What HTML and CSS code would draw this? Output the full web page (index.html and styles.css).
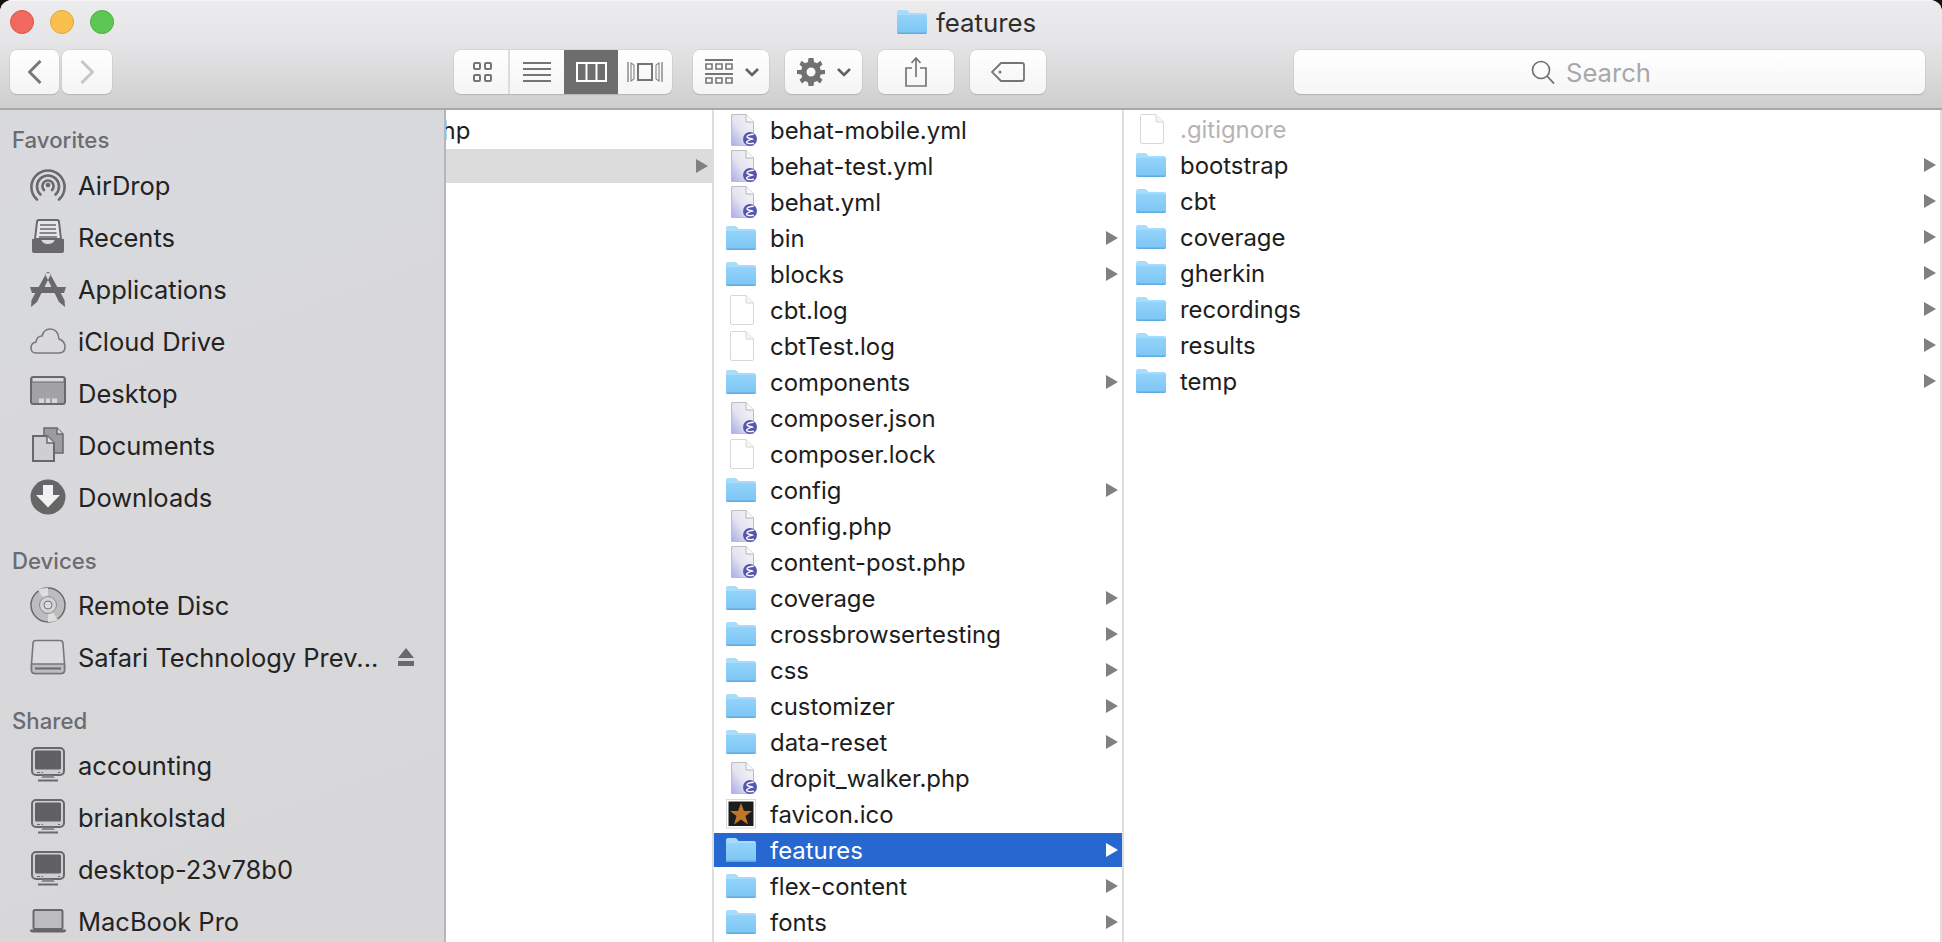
FILE: index.html
```html
<!DOCTYPE html>
<html lang="en">
<head>
<meta charset="utf-8">
<title>features</title>
<link rel="stylesheet" href="styles.css">
</head>
<body>
<svg class="defs" width="0" height="0" aria-hidden="true">
  <defs>
    <linearGradient id="fg" x1="0" y1="0" x2="0" y2="1"><stop offset="0" stop-color="#93d3fa"/><stop offset="1" stop-color="#7cc5f5"/></linearGradient>
    <linearGradient id="pg" x1="1" y1="0" x2="0" y2="1"><stop offset="0" stop-color="#f6f6f6"/><stop offset=".55" stop-color="#e4e4f0"/><stop offset="1" stop-color="#a9a9e8"/></linearGradient>
    <symbol id="folder" viewBox="0 0 30 24">
      <path d="M0 3Q0 0 2 0H9Q10.500 0 11.500 1.500L12.500 3H28Q30 3 30 5V22Q30 24 28 24H2Q0 24 0 22Z" fill="#a7ddfb"/>
      <path d="M0 6Q0 5 1 5H29Q30 5 30 6V22Q30 24 28 24H2Q0 24 0 22Z" fill="url(#fg)"/>
      <path d="M0 22.500H30V22Q30 24 28 24H2Q0 24 0 22Z" fill="#5fabe0"/>
    </symbol>
    <symbol id="doc" viewBox="0 0 24 30">
      <path d="M1.500 .5H16L23.500 8V28Q23.500 29.500 22 29.500H2Q.5 29.500 .5 28V1.500Q.5.5 1.500.5Z" fill="#fff" stroke="#d6d6d6"/>
      <path d="M16 .5V7Q16 8 17 8H23.500" fill="#f4f4f4" stroke="#d6d6d6"/>
    </symbol>
    <symbol id="script" viewBox="0 0 26 32">
      <path d="M.5 .5H15L22.500 8V31.500H.5Z" fill="url(#pg)" stroke="#bdbdc4"/>
      <path d="M15 .5V8H22.500" fill="#fafafa" stroke="#b5b5b5"/>
      <circle cx="19" cy="25" r="7" fill="#5656ae"/>
      <path d="M22.800 20.300C19 20.300 15.500 21.500 16 23C16.500 24.500 21 24.500 21.500 25C20 25.500 15.500 26.500 15.500 28C15.500 29.500 19.500 30 22.800 29.200" fill="none" stroke="#fff" stroke-width="1.400"/>
    </symbol>
    <symbol id="star" viewBox="0 0 30 30">
      <rect x=".5" y=".5" width="29" height="28.500" fill="#fff" stroke="#d8d8d8"/>
      <rect x="2.500" y="2.500" width="25" height="24.500" fill="#1c1c1c"/>
      <path d="M15 4L18 12H26L19.500 17L22 25.500L15 20.500L8 25.500L10.500 17L4 12H12Z" fill="#c27528"/>
    </symbol>
    <symbol id="airdrop" viewBox="0 0 36 36">
      <g fill="none" stroke="#69696b" stroke-width="2.600" stroke-linecap="round">
        <path d="M7 32.500A16.600 16.600 0 1 1 29 32.500"/>
        <path d="M10.500 27.500A11 11 0 1 1 25.500 27.500"/>
        <path d="M14 23A5.600 5.600 0 1 1 22 23"/>
      </g>
      <circle cx="18" cy="18" r="2.300" fill="#69696b"/>
    </symbol>
    <symbol id="recents" viewBox="0 0 36 36">
      <path d="M5 20L7 3Q7 1 9 1H27Q29 1 29 3L31 20Z" fill="#fff" fill-opacity=".35" stroke="#69696b" stroke-width="2"/>
      <path d="M10 6H26M10 10H26M9.500 14H26.500M9 18H27" stroke="#69696b" stroke-width="1.600"/>
      <path d="M2 19H11Q12 24 18 24Q24 24 25 19H34V31Q34 33 32 33H4Q2 33 2 31Z" fill="#69696b" transform="translate(0,1)"/>
    </symbol>
    <symbol id="apps" viewBox="0 0 36 36">
      <path d="M0 16H10L8 22H2ZM26 16H36L34 22H28ZM13 16H23L25 22H11Z" fill="#69696b"/>
      <path d="M17 1L21 3L7 31L1 36L1.500 29ZM19 1L15 3L29 31L35 36L34.500 29Z" fill="#69696b"/>
    </symbol>
    <symbol id="cloud" viewBox="0 0 36 36">
      <path d="M6 30Q1 30 1 25Q1 20 6 19Q7 13 12 13Q14 6 20 6Q28 6 29 16Q35 18 35 24Q35 30 29 30Z" fill="#dadadd" stroke="#79797b" stroke-width="1.600"/>
    </symbol>
    <symbol id="desktop" viewBox="0 0 36 36">
      <rect x="1" y="2" width="34" height="27" rx="2.500" fill="#a3a3a6" stroke="#69696b" stroke-width="2"/>
      <path d="M2 2.500H34V7H2Z" fill="#d9d9dc" stroke="#69696b" stroke-width="1"/>
      <path d="M9 23.500H27V28H9Z" fill="#d9d9dc"/>
      <path d="M15 23.500V28M21 23.500V28" stroke="#69696b"/>
    </symbol>
    <symbol id="docs" viewBox="0 0 36 36">
      <path d="M14 1H27L33 7V26H14Z" fill="#9c9ca0" stroke="#69696b" stroke-width="1.500"/>
      <path d="M3 9H17L24 16V34H3Z" fill="#cfcfd2" stroke="#69696b" stroke-width="2"/>
      <path d="M17 9V16H24M27 1V7H33" fill="#dedee0" stroke="#69696b" stroke-width="1.500"/>
    </symbol>
    <symbol id="down" viewBox="0 0 36 36">
      <circle cx="18" cy="18" r="17.500" fill="#666668"/>
      <path d="M13 6H23V16H30L18 28.500L6 16H13Z" fill="#f1f1f2"/>
    </symbol>
    <symbol id="disc" viewBox="0 0 36 36">
      <circle cx="18" cy="18" r="17" fill="#bdbdc0" stroke="#69696b" stroke-width="1.500"/>
      <path d="M18 18L8 3A18 18 0 0 1 18 1ZM18 18L28 33A18 18 0 0 1 18 35Z" fill="#dededf"/>
      <circle cx="18" cy="18" r="8.500" fill="#d3d3d5" stroke="#8a8a8c"/>
      <circle cx="18" cy="18" r="4" fill="#dadadd" stroke="#77777a"/>
    </symbol>
    <symbol id="drive" viewBox="0 0 36 36">
      <path d="M6 1.500H30Q33 1.500 33 4.500L34.500 25V31Q34.500 34.500 31 34.500H5Q1.500 34.500 1.500 31V25L3 4.500Q3 1.500 6 1.500Z" fill="#dcdcdf" stroke="#777779" stroke-width="1.600"/>
      <path d="M1.500 25H34.500V31Q34.500 34.500 31 34.500H5Q1.500 34.500 1.500 31Z" fill="#bdbdc0" stroke="#777779" stroke-width="1.600"/>
      <path d="M5 29.500H31" stroke="#69696b" stroke-width="2"/>
    </symbol>
    <symbol id="pc" viewBox="0 0 36 36">
      <rect x="2" y="1" width="32" height="27" rx="4" fill="#cfcfd2" stroke="#69696b" stroke-width="2"/>
      <rect x="5" y="3.500" width="26" height="19" rx="1.500" fill="#616063"/>
      <path d="M7 25.500H10M11.500 25.500H13M28 25.500H30" stroke="#69696b" stroke-width="1.200"/>
      <path d="M13 28.500H23L25 31H11Z" fill="#8a8a8c"/>
      <path d="M8 32.500H28V34.500H8Z" fill="#69696b"/>
    </symbol>
    <symbol id="laptop" viewBox="0 0 36 24">
      <rect x="3.500" y="1" width="29" height="19" rx="1.500" fill="#bcbbbd" stroke="#69696b" stroke-width="2"/>
      <path d="M0 20.500H36V21Q36 23.500 33 23.500H3Q0 23.500 0 21Z" fill="#656567"/>
    </symbol>
  </defs>
</svg>

<div class="window">
  <header class="toolbar">
    <div class="titlebar">
      <div class="lights">
        <span class="light red"></span>
        <span class="light yellow"></span>
        <span class="light green"></span>
      </div>
      <div class="title">
        <svg class="ico-folder"><use href="#folder"/></svg>
        <span>features</span>
      </div>
    </div>
    <div class="tools">
      <div class="nav">
        <button class="btn nav-btn"><svg width="14" height="24" viewBox="0 0 14 24"><path d="M12.500 1L1.500 12L12.500 23" fill="none" stroke="#777" stroke-width="3"/></svg></button>
        <button class="btn nav-btn"><svg width="14" height="24" viewBox="0 0 14 24"><path d="M1.500 1L12.500 12L1.500 23" fill="none" stroke="#c6c6c6" stroke-width="3"/></svg></button>
      </div>
      <div class="views">
        <div class="view view-a"><svg width="19" height="20" viewBox="0 0 19 20"><g fill="none" stroke="#757575" stroke-width="2"><rect x="1" y="1" width="6" height="6" rx="1"/><rect x="12" y="1" width="6" height="6" rx="1"/><rect x="1" y="13" width="6" height="6" rx="1"/><rect x="12" y="13" width="6" height="6" rx="1"/></g></svg></div>
        <div class="view view-b"><svg width="28" height="20" viewBox="0 0 28 20"><path d="M0 1H28M0 7H28M0 13H28M0 19H28" stroke="#757575" stroke-width="1.800"/></svg></div>
        <div class="view view-on"><svg width="31" height="20" viewBox="0 0 31 20"><path d="M1 1H30V19H1ZM10.500 1V19M20.500 1V19" fill="none" stroke="#fff" stroke-width="2"/></svg></div>
        <div class="view"><svg width="36" height="20" viewBox="0 0 36 20"><g fill="none" stroke="#858585"><path d="M1 0V20M35 0V20" stroke-width="1.400"/><path d="M4 1V19L7 17V3ZM29 3V17L32 19V1Z" stroke-width="1.100"/><rect x="11" y="2" width="14" height="16" stroke="#757575" stroke-width="2"/></g></svg></div>
      </div>
      <button class="btn menu arrange">
        <svg width="28" height="26" viewBox="0 0 28 26"><g fill="none" stroke="#757575"><path d="M0 1H28M0 15H28" stroke-width="2"/><path d="M1 5H7V10H1ZM11 5H17V10H11ZM21 5H27V10H21ZM1 19H7V24H1ZM11 19H17V24H11ZM21 19H27V24H21Z" stroke-width="1.600"/></g></svg>
        <svg class="chev" width="14" height="9" viewBox="0 0 14 9"><path d="M1 1L7 7L13 1" fill="none" stroke="#606060" stroke-width="2.600"/></svg>
      </button>
      <button class="btn menu gear">
        <svg width="28" height="28" viewBox="0 0 28 28"><path d="M11.500 0H16.500L17 4L20 5.300L23.500 2.800L25.500 6.500L22.800 9L23.700 12L28 12V16L23.700 16.500L22.800 19.300L25.500 21.800L23 25.500L20 23L17 24.300L16.500 28H11.500L11 24.300L8 23L5 25.500L2.500 21.800L5.200 19.300L4.300 16.500L0 16V12L4.300 12L5.200 9L2.500 6.500L4.500 2.800L8 5.300L11 4ZM14 9.500A4.500 4.500 0 1 0 14 18.500A4.500 4.500 0 1 0 14 9.500Z" fill="#717171" fill-rule="evenodd"/></svg>
        <svg class="chev" width="14" height="9" viewBox="0 0 14 9"><path d="M1 1L7 7L13 1" fill="none" stroke="#606060" stroke-width="2.600"/></svg>
      </button>
      <button class="btn action"><svg width="22" height="30" viewBox="0 0 22 30"><path d="M7 11H1V29H21V11H15M11 20V1M6.500 6L11 1L15.500 6" fill="none" stroke="#757575" stroke-width="1.700"/></svg></button>
      <button class="btn action"><svg width="34" height="20" viewBox="0 0 34 20"><path d="M10 1H31Q33 1 33 3V17Q33 19 31 19H10L1 10Z" fill="none" stroke="#757575" stroke-width="1.800"/><circle cx="9" cy="10" r="1.500" fill="#757575"/></svg></button>
      <div class="search">
        <svg width="24" height="24" viewBox="0 0 24 24"><circle cx="10" cy="10" r="8.500" fill="none" stroke="#6e6e6e" stroke-width="1.600"/><path d="M16 16L23 23.500" stroke="#6e6e6e" stroke-width="1.800"/></svg>
        <span>Search</span>
      </div>
    </div>
  </header>

  <div class="main">
    <aside class="sidebar">
      <h2 class="head head-first">Favorites</h2>
      <ul class="places">
        <li><svg class="pi"><use href="#airdrop"/></svg><span>AirDrop</span></li>
        <li><svg class="pi"><use href="#recents"/></svg><span>Recents</span></li>
        <li><svg class="pi"><use href="#apps"/></svg><span>Applications</span></li>
        <li><svg class="pi"><use href="#cloud"/></svg><span>iCloud Drive</span></li>
        <li><svg class="pi"><use href="#desktop"/></svg><span>Desktop</span></li>
        <li><svg class="pi"><use href="#docs"/></svg><span>Documents</span></li>
        <li><svg class="pi"><use href="#down"/></svg><span>Downloads</span></li>
      </ul>
      <h2 class="head">Devices</h2>
      <ul class="places">
        <li><svg class="pi"><use href="#disc"/></svg><span>Remote Disc</span></li>
        <li><svg class="pi"><use href="#drive"/></svg><span>Safari Technology Prev...</span>
          <svg class="eject" width="16" height="18" viewBox="0 0 16 18"><path d="M8 0L16 10H0Z M0 13H16V18H0Z" fill="#69696b"/></svg></li>
      </ul>
      <h2 class="head head-shared">Shared</h2>
      <ul class="places">
        <li><svg class="pi"><use href="#pc"/></svg><span>accounting</span></li>
        <li><svg class="pi"><use href="#pc"/></svg><span>briankolstad</span></li>
        <li><svg class="pi"><use href="#pc"/></svg><span>desktop-23v78b0</span></li>
        <li><svg class="pi pi-laptop"><use href="#laptop"/></svg><span>MacBook Pro</span></li>
      </ul>
    </aside>

    <section class="col col-1">
      <div class="row row-clip"><span class="clip-name">hp</span></div>
      <div class="row row-parent"><i class="arrow"></i></div>
    </section>

    <section class="col col-2">
      <div class="row"><svg class="ico-script"><use href="#script"/></svg><span>behat-mobile.yml</span></div>
      <div class="row"><svg class="ico-script"><use href="#script"/></svg><span>behat-test.yml</span></div>
      <div class="row"><svg class="ico-script"><use href="#script"/></svg><span>behat.yml</span></div>
      <div class="row"><svg class="ico-folder"><use href="#folder"/></svg><span>bin</span><i class="arrow"></i></div>
      <div class="row"><svg class="ico-folder"><use href="#folder"/></svg><span>blocks</span><i class="arrow"></i></div>
      <div class="row"><svg class="ico-doc"><use href="#doc"/></svg><span>cbt.log</span></div>
      <div class="row"><svg class="ico-doc"><use href="#doc"/></svg><span>cbtTest.log</span></div>
      <div class="row"><svg class="ico-folder"><use href="#folder"/></svg><span>components</span><i class="arrow"></i></div>
      <div class="row"><svg class="ico-script"><use href="#script"/></svg><span>composer.json</span></div>
      <div class="row"><svg class="ico-doc"><use href="#doc"/></svg><span>composer.lock</span></div>
      <div class="row"><svg class="ico-folder"><use href="#folder"/></svg><span>config</span><i class="arrow"></i></div>
      <div class="row"><svg class="ico-script"><use href="#script"/></svg><span>config.php</span></div>
      <div class="row"><svg class="ico-script"><use href="#script"/></svg><span>content-post.php</span></div>
      <div class="row"><svg class="ico-folder"><use href="#folder"/></svg><span>coverage</span><i class="arrow"></i></div>
      <div class="row"><svg class="ico-folder"><use href="#folder"/></svg><span>crossbrowsertesting</span><i class="arrow"></i></div>
      <div class="row"><svg class="ico-folder"><use href="#folder"/></svg><span>css</span><i class="arrow"></i></div>
      <div class="row"><svg class="ico-folder"><use href="#folder"/></svg><span>customizer</span><i class="arrow"></i></div>
      <div class="row"><svg class="ico-folder"><use href="#folder"/></svg><span>data-reset</span><i class="arrow"></i></div>
      <div class="row"><svg class="ico-script"><use href="#script"/></svg><span>dropit_walker.php</span></div>
      <div class="row"><svg class="ico-star"><use href="#star"/></svg><span>favicon.ico</span></div>
      <div class="row row-selected"><svg class="ico-folder"><use href="#folder"/></svg><span>features</span><i class="arrow"></i></div>
      <div class="row"><svg class="ico-folder"><use href="#folder"/></svg><span>flex-content</span><i class="arrow"></i></div>
      <div class="row"><svg class="ico-folder"><use href="#folder"/></svg><span>fonts</span><i class="arrow"></i></div>
      <div class="row"><svg class="ico-script"><use href="#script"/></svg></div>
    </section>

    <section class="col col-3">
      <div class="row row-dim"><svg class="ico-doc"><use href="#doc"/></svg><span>.gitignore</span></div>
      <div class="row"><svg class="ico-folder"><use href="#folder"/></svg><span>bootstrap</span><i class="arrow"></i></div>
      <div class="row"><svg class="ico-folder"><use href="#folder"/></svg><span>cbt</span><i class="arrow"></i></div>
      <div class="row"><svg class="ico-folder"><use href="#folder"/></svg><span>coverage</span><i class="arrow"></i></div>
      <div class="row"><svg class="ico-folder"><use href="#folder"/></svg><span>gherkin</span><i class="arrow"></i></div>
      <div class="row"><svg class="ico-folder"><use href="#folder"/></svg><span>recordings</span><i class="arrow"></i></div>
      <div class="row"><svg class="ico-folder"><use href="#folder"/></svg><span>results</span><i class="arrow"></i></div>
      <div class="row"><svg class="ico-folder"><use href="#folder"/></svg><span>temp</span><i class="arrow"></i></div>
    </section>
  </div>
</div>
</body>
</html>
```

FILE: styles.css
```css
* { box-sizing: border-box; }
html, body { margin: 0; height: 100%; background: #111; overflow: hidden; }
body { font-family: Inter, "Liberation Sans", sans-serif; font-size: 23.9px; color: #1d1d1d; }
.defs { display: block; height: 0; }
.window { height: 942px; display: flex; flex-direction: column; border-radius: 12px 12px 0 0; overflow: hidden; background: #fff; }

/* toolbar */
.toolbar { height: 110px; flex: none; background: linear-gradient(#ececee, #e6e6e8 35%, #cfcecf); border-top: 1px solid #f6f6f7; border-bottom: 2px solid #a9a9a9; }
.titlebar { height: 49px; display: flex; align-items: flex-start; padding: 9px 0 0 10px; }
.lights { display: flex; gap: 16px; }
.light { width: 24px; height: 24px; border-radius: 50%; }
.red { background: #f16a5f; border: 1px solid #dc5348; }
.yellow { background: #f9c04e; border: 1px solid #e0a537; }
.green { background: #5cc853; border: 1px solid #48ad3f; }
.title { display: flex; align-items: center; gap: 9px; margin-left: 783px; font-size: 25.8px; color: #2e2e2e; height: 24px; }
.title .ico-folder { margin: 0; }
.tools { display: flex; align-items: stretch; height: 44px; padding: 0 17px 0 10px; }
.btn { display: flex; align-items: center; justify-content: center; padding: 0; background: linear-gradient(#fff, #f4f4f4); border: 0; border-radius: 7px; box-shadow: 0 0 0 .5px #c8c8c8, 0 1px 1px #a8a8a8; }
.nav { display: flex; gap: 3px; }
.nav-btn { width: 49px; }
.nav-btn + .nav-btn { width: 50px; }
.views { display: flex; width: 218px; margin-left: 342px; border-radius: 7px; overflow: hidden; background: linear-gradient(#fff, #f4f4f4); box-shadow: 0 0 0 .5px #c8c8c8, 0 1px 1px #a8a8a8; }
.view { flex: none; width: 54px; display: flex; align-items: center; justify-content: center; }
.view-a { width: 56px; border-right: 2px solid #dcdcdc; padding-left: 2px; }
.view-on { background: #6d6d6d; }
.menu { width: 77px; gap: 12px; margin-left: 16px; justify-content: flex-start; padding-left: 12px; }
.arrange { margin-left: 21px; }
.action { width: 76px; margin-left: 16px; }
.search { flex: none; width: 631px; margin-left: 248px; display: flex; align-items: center; justify-content: center; gap: 11px; padding-right: 37px; background: linear-gradient(#fff, #f6f6f6); border-radius: 7px; box-shadow: 0 0 0 .5px #c8c8c8, 0 1px 1px #a0a0a0; font-size: 25.6px; color: #a8a8a8; }

/* main */
.main { flex: 1; min-height: 0; display: flex; }
.sidebar { flex: none; width: 446px; padding-top: 15px; background: linear-gradient(160deg, #d9dade, #d7d6d8); border-right: 2px solid #b6b6b8; }
.head { margin: 0; height: 30px; padding-left: 12px; font-size: 22.2px; line-height: 30px; font-weight: 500; color: #6c6c70; }
.places + .head { margin-top: 23px; }
.places { margin: 3px 0 0; padding: 0; list-style: none; font-size: 25.5px; }
.head-first + .places { margin-top: 4px; }
.places li { height: 52px; display: flex; align-items: center; padding-left: 30px; color: #232323; }
.pi { flex: none; width: 36px; height: 36px; margin-right: 12px; }
.pi-laptop { height: 24px; }
.eject { margin-left: 20px; }

.col { flex: none; padding-top: 3px; overflow: hidden; background: #fff; border-right: 2px solid #dedede; }
.col-1 { width: 268px; }
.col-2 { width: 410px; }
.col-3 { flex: 1; padding-top: 2px; }
.row { height: 34px; margin-bottom: 2px; display: flex; align-items: center; padding-right: 4px; white-space: nowrap; }
.row svg { flex: none; }
.ico-folder { width: 30px; height: 24px; margin: 0 14px 0 12px; }
.ico-script { width: 26px; height: 32px; margin: 0 13px 0 17px; }
.ico-doc { width: 24px; height: 30px; margin: 0 16px 0 16px; }
.ico-star { width: 30px; height: 30px; margin: 0 14px 0 12px; }
.arrow { margin-left: auto; width: 0; height: 0; border-left: 12px solid #808080; border-top: 7px solid transparent; border-bottom: 7px solid transparent; }
.row-clip { background: linear-gradient(#a8dcfb, #a8dcfb) left center / 1px 20px no-repeat; }
.clip-name { margin-left: -4.500px; }
.row-parent { background: #dcdcdc; }
.row-selected { background: #2668d0; color: #fff; }
.row-selected .arrow { border-left-color: #fff; }
.row-dim { color: #b5b5b5; }
```
